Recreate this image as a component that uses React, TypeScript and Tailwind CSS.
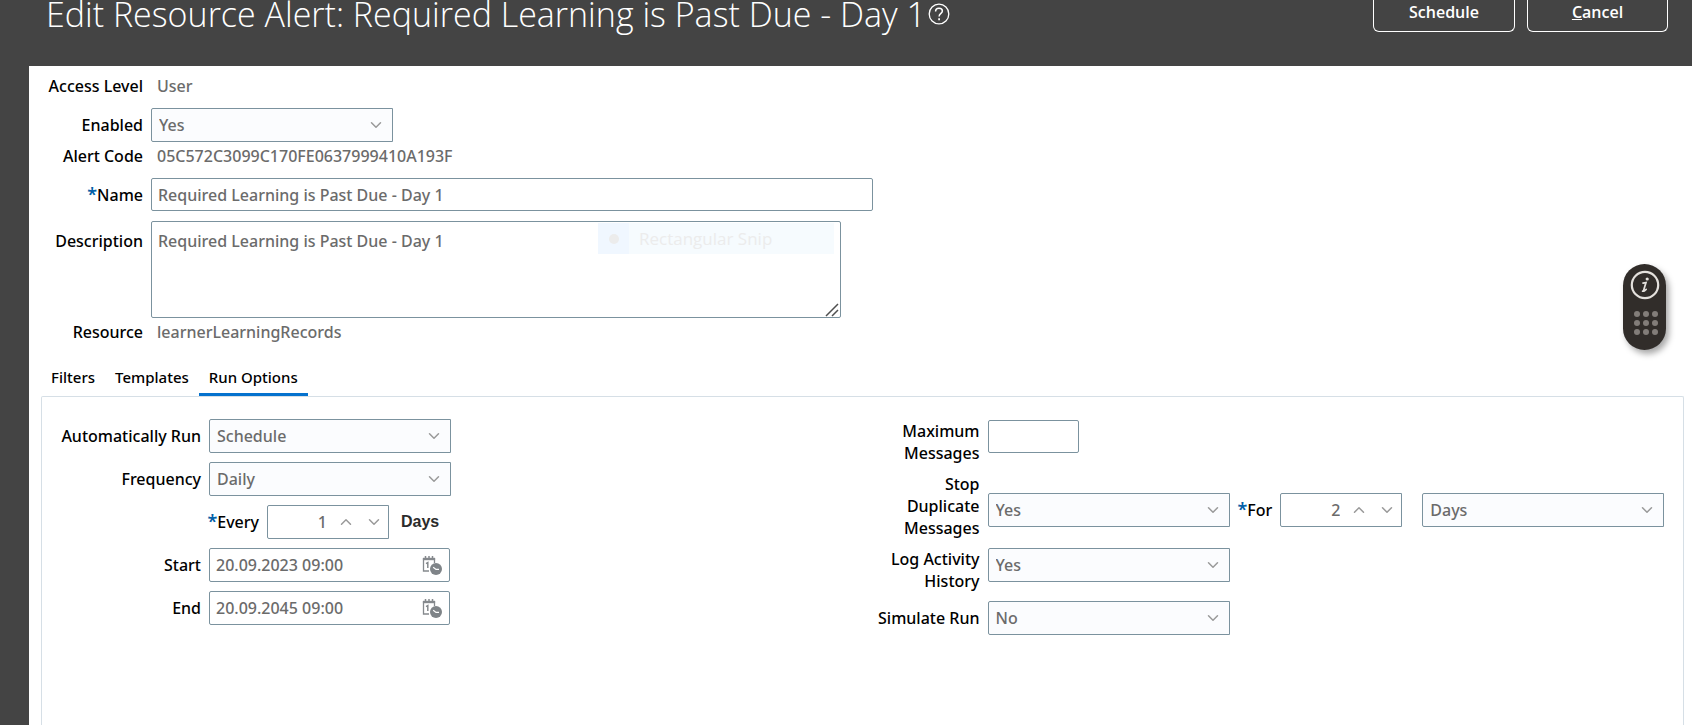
import { useState } from 'react'
import type { ReactNode } from 'react'
import { ChevronDown, ChevronUp } from 'lucide-react'
import clsx from 'clsx'

const CONTROL = 'border border-[#7b929e] text-[#6b6b6b] outline-none'

const TABS = ['Filters', 'Templates', 'Run Options']

function Required() {
  return <span className="text-lg font-semibold leading-none text-[#0561a8]">*</span>
}

function SelectBox({ id, value, options, className }: { id: string; value: string; options: string[]; className?: string }) {
  return (
    <div className={clsx('relative w-[242px]', className)}>
      <select
        id={id}
        defaultValue={value}
        className={clsx(CONTROL, 'h-[34px] w-full appearance-none rounded-l-xs bg-[#fbfcfe] pl-[7px] pr-8')}
      >
        {options.map((option) => (
          <option key={option}>{option}</option>
        ))}
      </select>
      <ChevronDown className="pointer-events-none absolute right-2 top-2 h-[18px] w-[18px] text-[#9a9a9a]" strokeWidth={2} />
    </div>
  )
}

function Spinner({ id, initial }: { id: string; initial: number }) {
  const [value, setValue] = useState(initial)

  return (
    <div className={clsx(CONTROL, 'flex h-[34px] w-[122px] items-center rounded-l-xs bg-white')}>
      <input
        id={id}
        type="text"
        inputMode="numeric"
        value={value}
        onChange={(e) => setValue(Number(e.target.value) || 0)}
        className="w-[59px] text-right outline-none"
      />
      <button type="button" aria-label="Increase" onClick={() => setValue(value + 1)} className="ml-[10px] text-[#9a9a9a]">
        <ChevronUp className="h-[18px] w-[18px]" />
      </button>
      <button type="button" aria-label="Decrease" onClick={() => setValue(value - 1)} className="ml-[10px] text-[#9a9a9a]">
        <ChevronDown className="h-[18px] w-[18px]" />
      </button>
    </div>
  )
}

function CalendarClockIcon() {
  return (
    <svg viewBox="0 0 20 20" className="h-5 w-5" fill="none">
      <path d="M7 16H1.5V4h11v4" stroke="#85898d" strokeWidth="1.3" />
      <path d="M0.9 2.8h12.2v2.4H0.9z" fill="#85898d" />
      <path d="M3.5 1v3M7 1v3M10.5 1v3" stroke="#85898d" strokeWidth="1.5" />
      <path d="M4 8.6l1.8-1v5.4" stroke="#85898d" strokeWidth="1.5" />
      <circle cx="14" cy="14" r="6" fill="#7f8488" />
      <path d="M11.2 12.2l2.8 2.2h3" stroke="#fff" strokeWidth="1.2" />
    </svg>
  )
}

function DateTimeBox({ id, value }: { id: string; value: string }) {
  return (
    <div className={clsx(CONTROL, 'flex h-[34px] w-[241px] items-center rounded-xs bg-white pl-[6px] pr-[7px]')}>
      <input id={id} type="text" defaultValue={value} className="min-w-0 flex-1 outline-none" />
      <button type="button" aria-label="Select date and time">
        <CalendarClockIcon />
      </button>
    </div>
  )
}

function FormRow({ id, label, required, children }: { id?: string; label: string; required?: boolean; children: ReactNode }) {
  return (
    <div className="flex items-center gap-2">
      <label htmlFor={id} className="w-[114px] shrink-0 text-right">
        {required && <Required />}
        {label}
      </label>
      {children}
    </div>
  )
}

function RunOptions() {
  return (
    <div className="grid grid-cols-2 pt-[22px]">
      <div className="flex flex-col gap-[9px]">
        <div className="flex items-center gap-2">
          <label htmlFor="auto-run" className="w-[159px] text-right">Automatically Run</label>
          <SelectBox id="auto-run" value="Schedule" options={['Schedule', 'On event']} />
        </div>
        <div className="flex items-center gap-2">
          <label htmlFor="frequency" className="w-[159px] text-right">Frequency</label>
          <SelectBox id="frequency" value="Daily" options={['Daily', 'Weekly', 'Monthly']} />
        </div>
        <div className="flex items-center gap-2">
          <label htmlFor="every" className="w-[217px] text-right">
            <Required />Every
          </label>
          <Spinner id="every" initial={1} />
          <span className="ml-1 font-['Liberation_Sans',sans-serif] font-bold text-[#2b2b2b]">Days</span>
        </div>
        <div className="flex items-center gap-2">
          <label htmlFor="start" className="w-[159px] text-right">Start</label>
          <DateTimeBox id="start" value="20.09.2023 09:00" />
        </div>
        <div className="flex items-center gap-2">
          <label htmlFor="end" className="w-[159px] text-right">End</label>
          <DateTimeBox id="end" value="20.09.2045 09:00" />
        </div>
      </div>

      <div className="flex flex-col gap-[9px] pl-[9px] pt-px">
        <div className="flex items-start gap-2">
          <label htmlFor="max-messages" className="w-[108px] text-right">Maximum Messages</label>
          <input id="max-messages" type="text" className={clsx(CONTROL, 'h-[33px] w-[91px] rounded-xs bg-white px-2')} />
        </div>
        <div className="flex items-center gap-2">
          <label htmlFor="stop-duplicates" className="w-[108px] shrink-0 pl-2 text-right">Stop Duplicate Messages</label>
          <div className="flex items-center gap-2 pt-2">
            <SelectBox id="stop-duplicates" value="Yes" options={['Yes', 'No']} />
            <label htmlFor="for-count">
              <Required />For
            </label>
            <Spinner id="for-count" initial={2} />
            <SelectBox id="for-unit" value="Days" options={['Days', 'Hours']} className="ml-3" />
          </div>
        </div>
        <div className="flex items-start gap-2">
          <label htmlFor="log-history" className="w-[108px] text-right">Log Activity History</label>
          <SelectBox id="log-history" value="Yes" options={['Yes', 'No']} />
        </div>
        <div className="flex items-center gap-2">
          <label htmlFor="simulate" className="w-[108px] text-right">Simulate Run</label>
          <SelectBox id="simulate" value="No" options={['Yes', 'No']} />
        </div>
      </div>
    </div>
  )
}

// Floating help / launcher pill on the right edge
function FloatingDock() {
  return (
    <aside className="fixed right-[26px] top-[264px] flex h-[86px] w-[43px] flex-col items-center rounded-full bg-[#312d2a] pt-[6px] shadow-[3px_4px_6px_rgba(0,0,0,0.35)]">
      <button type="button" aria-label="Information">
        <svg viewBox="0 0 30 30" className="h-[30px] w-[30px]" fill="none">
          <circle cx="15" cy="15" r="13.2" stroke="#e4e1dd" strokeWidth="2.2" />
          <circle cx="17.2" cy="9" r="1.6" fill="#e4e1dd" />
          <path d="M13 13.2l3-.6-2.2 7.2q-.3 1.4.8 1l1.6-1.4M12.6 21.2h1.4" stroke="#e4e1dd" strokeWidth="1.7" strokeLinecap="round" />
        </svg>
      </button>
      <button type="button" aria-label="Open launcher" className="mt-[11px] grid grid-cols-3 gap-[3px] pl-[3px]">
        {Array.from({ length: 9 }, (_, i) => (
          <span key={i} className="h-[6px] w-[6px] rounded-full bg-[#827d79]" />
        ))}
      </button>
    </aside>
  )
}

export default function App() {
  const [activeTab, setActiveTab] = useState('Run Options')

  return (
    <div className="flex min-h-screen flex-col bg-[#444444] font-['Noto_Sans','Open_Sans',sans-serif] text-base font-medium leading-[22px] text-black">
      {/* Header */}
      <header className="flex h-[66px] items-start justify-between pl-[46px] pr-6 font-['Open_Sans','Noto_Sans',sans-serif] text-white">
        <div className="flex items-center gap-[2px]">
          <h1 className="text-[34px] font-light leading-7">Edit Resource Alert: Required Learning is Past Due - Day 1</h1>
          <button type="button" aria-label="Help">
            <svg viewBox="0 0 22 22" className="h-[22px] w-[22px]" fill="none" stroke="#fff">
              <circle cx="11" cy="11" r="9.8" strokeWidth="1.3" />
              <path d="M7.6 8.4c0-2 1.5-3.2 3.4-3.2s3.4 1.2 3.4 2.9c0 2.3-3.3 2.4-3.3 5.4" strokeWidth="1.5" />
              <path d="M11.1 15.2v2" strokeWidth="1.7" />
            </svg>
          </button>
        </div>
        <div className="flex gap-3">
          <button type="button" className="h-8 w-[142px] rounded-b-md border border-t-0 border-white pb-2 font-semibold">
            Schedule
          </button>
          <button type="button" className="h-8 w-[141px] rounded-b-md border border-t-0 border-white pb-2 font-semibold">
            <span className="underline">C</span>ancel
          </button>
        </div>
      </header>

      <main className="ml-[29px] flex flex-1 flex-col bg-white pt-[9px]">
        {/* Alert details */}
        <div className="flex flex-col">
          <FormRow label="Access Level">
            <span className="pl-[6px] text-[#6b6b6b]">User</span>
          </FormRow>
          <div className="mt-[11px]">
            <FormRow id="enabled" label="Enabled">
              <SelectBox id="enabled" value="Yes" options={['Yes', 'No']} />
            </FormRow>
          </div>
          <div className="mt-[3px]">
            <FormRow label="Alert Code">
              <span className="pl-[6px] text-[#6b6b6b]">05C572C3099C170FE0637999410A193F</span>
            </FormRow>
          </div>
          <div className="mt-[11px]">
            <FormRow id="name" label="Name" required>
              <input
                id="name"
                type="text"
                defaultValue="Required Learning is Past Due - Day 1"
                className={clsx(CONTROL, 'h-[33px] w-[722px] rounded-xs bg-white px-[6px]')}
              />
            </FormRow>
          </div>
          <div className="mt-[10px] flex items-start gap-2">
            <label htmlFor="description" className="w-[114px] shrink-0 pt-[9px] text-right">Description</label>
            <div className="relative">
              <textarea
                id="description"
                defaultValue="Required Learning is Past Due - Day 1"
                className={clsx(CONTROL, 'block h-[97px] w-[690px] resize-none rounded-xs bg-white px-[6px] py-2')}
              />
              <div className="pointer-events-none absolute right-[7px] top-[2px] flex h-[31px] w-[236px] items-center bg-[#f6fbfe] font-['Open_Sans','Noto_Sans',sans-serif] text-[17px] font-normal text-[#ececec]">
                <span className="flex h-full w-[31px] items-center justify-center bg-[#f0f7ff]">
                  <span className="h-[10px] w-[10px] rounded-full bg-[#ececec]" />
                </span>
                <span className="pl-[10px]">Rectangular Snip</span>
              </div>
              <svg viewBox="0 0 14 14" className="pointer-events-none absolute bottom-[1px] right-[2px] h-[14px] w-[14px]" stroke="#4f4f4f" strokeWidth="1.5">
                <path d="M1 13L13 1M7 13L13 7" />
              </svg>
            </div>
          </div>
          <div className="mt-[3px]">
            <FormRow label="Resource">
              <span className="pl-[6px] text-[#6b6b6b]">learnerLearningRecords</span>
            </FormRow>
          </div>
        </div>

        {/* Tabs */}
        <div role="tablist" className="ml-3 mt-[23px] flex text-[15px]">
          {TABS.map((tab) => (
            <button
              key={tab}
              type="button"
              role="tab"
              aria-selected={tab === activeTab}
              onClick={() => setActiveTab(tab)}
              className={clsx(
                'h-[30px] border-b-[3px] px-[10px] pb-[5px]',
                tab === activeTab ? 'border-[#0572ce]' : 'border-transparent'
              )}
            >
              {tab}
            </button>
          ))}
        </div>

        <section className="ml-3 mr-2 flex-1 rounded-t-xs border border-b-0 border-[#d6dfe6]">
          {activeTab === 'Run Options' && <RunOptions />}
        </section>
      </main>

      <FloatingDock />
    </div>
  )
}
